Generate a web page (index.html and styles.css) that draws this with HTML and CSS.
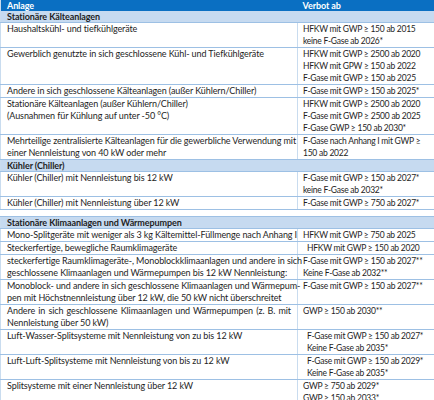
FILE: index.html
```html
<!DOCTYPE html>
<html lang="de">
<head>
<meta charset="utf-8">
<link rel="stylesheet" href="styles.css">
</head>
<body>
<table class="tbl">
  <colgroup><col class="c1"><col class="c2"></colgroup>
  <thead>
    <tr class="head"><th>Anlage</th><th class="r">Verbot ab</th></tr>
  </thead>
  <tbody>
    <tr class="sec"><td colspan="2">Stationäre Kälteanlagen</td></tr>
    <tr><td>Haushaltskühl- und tiefkühlgeräte</td><td class="r">HFKW mit GWP ≥ 150 ab 2015<br>keine F-Gase ab 2026*</td></tr>
    <tr><td>Gewerblich genutzte in sich geschlossene Kühl- und Tiefkühlgeräte</td><td class="r">HFKW mit GWP ≥ 2500 ab 2020<br>HFKW mit GPW ≥ 150 ab 2022<br>F-Gase mit GWP ≥ 150 ab 2025</td></tr>
    <tr><td>Andere in sich geschlossene Kälteanlagen (außer Kühlern/Chiller)</td><td class="r">F-Gase mit GWP ≥ 150 ab 2025*</td></tr>
    <tr><td>Stationäre Kälteanlagen (außer Kühlern/Chiller)<br>(Ausnahmen für Kühlung auf unter -50 °C)</td><td class="r">HFKW mit GWP ≥ 2500 ab 2020<br>F-Gase mit GWP ≥ 2500 ab 2025<br>F-Gase GWP ≥ 150 ab 2030*</td></tr>
    <tr><td><span class="jl">Mehrteilige zentralisierte Kälteanlagen für die gewerbliche Verwendung mit</span>einer Nennleistung von 40 kW oder mehr</td><td class="r">F-Gase nach Anhang I mit GWP ≥<br>150 ab 2022</td></tr>
    <tr class="sec"><td colspan="2">Kühler (Chiller)</td></tr>
    <tr><td>Kühler (Chiller) mit Nennleistung bis 12 kW</td><td class="r">F-Gase mit GWP ≥ 150 ab 2027*<br>keine F-Gase ab 2032*</td></tr>
    <tr><td>Kühler (Chiller) mit Nennleistung über 12 kW</td><td class="r">F-Gase mit GWP ≥ 750 ab 2027*</td></tr>
  </tbody>
</table>

<table class="tbl second">
  <colgroup><col class="c1"><col class="c2"></colgroup>
  <tbody>
    <tr class="sec"><td colspan="2">Stationäre Klimaanlagen und Wärmepumpen</td></tr>
    <tr><td>Mono-Splitgeräte mit weniger als 3 kg Kältemittel-Füllmenge nach Anhang I</td><td class="r">HFKW mit GWP ≥ 750 ab 2025</td></tr>
    <tr><td>Steckerfertige, bewegliche Raumklimageräte</td><td class="r in">HFKW mit GWP ≥ 150 ab 2020</td></tr>
    <tr><td><span class="jl">steckerfertige Raumklimageräte-, Monoblockklimaanlagen und andere in sich</span>geschlossene Klimaanlagen und Wärmepumpen bis 12 kW Nennleistung:</td><td class="r">F-Gase mit GWP ≥ 150 ab 2027**<br>Keine F-Gase ab 2032**</td></tr>
    <tr><td><span class="jl">Monoblock- und andere in sich geschlossene Klimaanlagen und Wärmepum-</span>pen mit Höchstnennleistung über 12 kW, die 50 kW nicht überschreitet</td><td class="r">F-Gase mit GWP ≥ 150 ab 2027**</td></tr>
    <tr><td><span class="jl">Andere in sich geschlossene Klimaanlagen und Wärmepumpen (z. B. mit</span>Nennleistung über 50 kW)</td><td class="r">GWP ≥ 150 ab 2030**</td></tr>
    <tr><td>Luft-Wasser-Splitsysteme mit Nennleistung von zu bis 12 kW</td><td class="r in">F-Gase mit GWP ≥ 150 ab 2027*<br>Keine F-Gase ab 2035*</td></tr>
    <tr><td>Luft-Luft-Splitsysteme mit Nennleistung von bis zu 12 kW</td><td class="r in">F-Gase mit GWP ≥ 150 ab 2029*<br>Keine F-Gase ab 2035*</td></tr>
    <tr><td>Splitsysteme mit einer Nennleistung über 12 kW</td><td class="r">GWP ≥ 750 ab 2029*<br>GWP ≥ 150 ab 2033*</td></tr>
  </tbody>
</table>
</body>
</html>
```

FILE: styles.css
```css
html, body {
  margin: 0;
  padding: 0;
  background: #ffffff;
}
body {
  font-family: Lato, "Open Sans", sans-serif;
  font-size: 9px;
  letter-spacing: -0.1px;
  color: #1e1e1e;
  width: 434px;
  overflow: hidden;
}
.tbl {
  width: 434px;
  border-collapse: collapse;
  table-layout: fixed;
  border-left: 1px solid #c9dcef;
  border-right: 1px solid #c9dcef;
}
.tbl.second {
  margin-top: 6px;
  border-top: 1px solid #9dc0e4;
}
.c1 { width: 297px; }
.c2 { width: 137px; }
th, td {
  padding: 0 6px;
  line-height: 12px;
  text-align: left;
  vertical-align: top;
  border-bottom: 1px solid #9dc0e4;
  font-weight: normal;
  white-space: nowrap;
}
td.r, th.r {
  border-left: 1px solid #c9dcef;
  padding-left: 5px;
  padding-right: 2px;
}
td.r {
  font-size: 8.5px;
  letter-spacing: -0.25px;
}
td.in {
  padding-left: 9px;
}
.head th {
  background: #0a6fc2;
  color: #ffffff;
  font-weight: bold;
  border-bottom: none;
  line-height: 11px;
}
.head th.r { border-left: none; }
.sec td {
  background: #c6daf0;
  font-weight: bold;
  line-height: 11px;
}
.jl {
  display: block;
  text-align: justify;
  text-align-last: justify;
}
```
